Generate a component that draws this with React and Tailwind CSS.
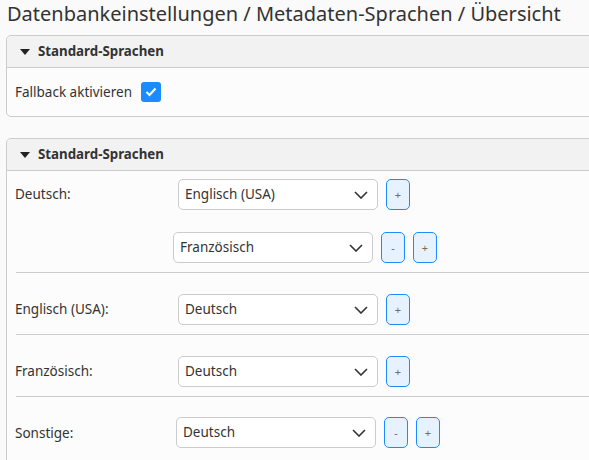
const font = { fontFamily: '"Noto Sans", "Open Sans", sans-serif' };

const Chevron = () => (
  <svg width="14" height="8" viewBox="0 0 14 8" className="shrink-0">
    <polyline points="1,1 7,7 13,1" fill="none" stroke="#333" strokeWidth="1.6" />
  </svg>
);

const Select = ({ value, className = "" }) => (
  <div
    className={`w-[200px] h-[31px] flex items-center justify-between pl-[6px] pr-[9px] bg-white border border-[#cccccc] rounded-[5px] text-[13.5px] text-[#333] ${className}`}
  >
    <span>{value}</span>
    <Chevron />
  </div>
);

const Btn = ({ children }) => (
  <button className="w-[24px] h-[31px] flex items-center justify-center rounded-[5px] border border-[#1a8cff] bg-[#e6f2ff] text-[11px] text-[#7a6a55] leading-none">
    {children}
  </button>
);

const Header = ({ title }) => (
  <div className="h-[32px] flex items-center pl-[13px] bg-[#f2f2f2] border-b border-[#cccccc] rounded-t-[5px]">
    <svg width="10" height="6" viewBox="0 0 10 6" className="mr-[8px]">
      <polygon points="0,0 10,0 5,6" fill="#222" />
    </svg>
    <span className="text-[13.3px] font-bold text-[#333]">{title}</span>
  </div>
);

const Row = ({ label, children, first, last }) => (
  <div
    className={`flex mx-[9px] ${first ? "pt-[8px]" : "pt-[21px]"} ${last ? "" : "pb-[9px] border-b border-[#cccccc]"}`}
  >
    <div className="w-[162px] shrink-0 h-[31px] flex items-center -ml-[1px] text-[13.5px] text-[#333]">{label}</div>
    <div className="flex flex-col gap-[22px] ml-[1px]">{children}</div>
  </div>
);

export default function App() {
  return (
    <div className="w-[589px] h-[460px] overflow-hidden bg-[#fafafa]" style={font}>
      <h1 className="pl-[7px] pt-[1px] text-[20px] leading-[26px] text-[#333] whitespace-nowrap">
        Datenbankeinstellungen / Metadaten-Sprachen / Übersicht
      </h1>
      <div className="ml-[6px] mt-[8px] w-[600px] border border-[#cccccc] rounded-[5px] bg-[#fcfcfc]">
        <Header title="Standard-Sprachen" />
        <div className="h-[48px] flex items-center pl-[8px] text-[13.5px] text-[#333]">
          Fallback aktivieren
          <span className="ml-[9px] w-[20px] h-[20px] rounded-[3px] bg-[#1a8cff] flex items-center justify-center">
            <svg width="12" height="10" viewBox="0 0 12 10">
              <polyline points="1.5,5 4.5,8 10.5,1.5" fill="none" stroke="white" strokeWidth="2" />
            </svg>
          </span>
        </div>
      </div>
      <div className="ml-[6px] mt-[21px] w-[600px] border border-[#cccccc] rounded-[5px] bg-[#fcfcfc] pb-[20px]">
        <Header title="Standard-Sprachen" />
        <Row label="Deutsch:" first>
          <div className="flex gap-[8px]">
            <Select value="Englisch (USA)" />
            <Btn>+</Btn>
          </div>
          <div className="flex gap-[8px] -ml-[5px]">
            <Select value="Französisch" />
            <Btn>-</Btn>
            <Btn>+</Btn>
          </div>
        </Row>
        <Row label="Englisch (USA):">
          <div className="flex gap-[8px]">
            <Select value="Deutsch" />
            <Btn>+</Btn>
          </div>
        </Row>
        <Row label="Französisch:">
          <div className="flex gap-[8px]">
            <Select value="Deutsch" />
            <Btn>+</Btn>
          </div>
        </Row>
        <Row label="Sonstige:" last>
          <div className="flex gap-[8px] -ml-[2px] -mt-[1px]">
            <Select value="Deutsch" />
            <Btn>-</Btn>
            <Btn>+</Btn>
          </div>
        </Row>
      </div>
    </div>
  );
}
